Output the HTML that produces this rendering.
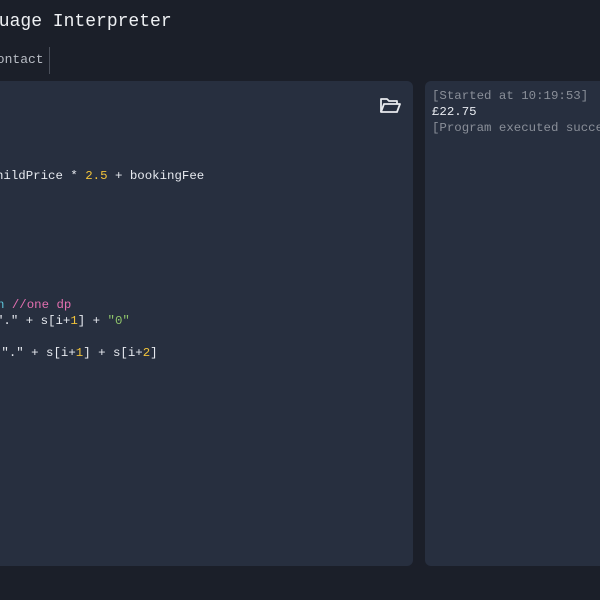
<!DOCTYPE html>
<html><head><style>
html,body{margin:0;padding:0;width:600px;height:600px;overflow:hidden;background:#1b1f29;font-family:"Liberation Mono",monospace;}
.t{position:absolute;white-space:pre;}
.panel{position:absolute;background:#272f3f;border-radius:6px;}
.code{font-size:12.4px;color:#e6e9ef;line-height:16px;}
.y{color:#f0c23a}.g{color:#8fc46a}.p{color:#e36fb0}.c{color:#5cc3d8}.gr{color:#8a8f99}
</style></head><body>
<div class="t" style="left:-12px;top:12px;font-size:18px;color:#eef0f3;">guage Interpreter</div>
<div class="t" style="left:-11px;top:52px;font-size:13px;color:#b8bcc4;">Contact</div>
<div style="position:absolute;left:49px;top:47px;width:1px;height:27px;background:#4a4f5a"></div>
<div class="panel" style="left:-10px;top:81px;width:423px;height:485px;"></div>
<div class="panel" style="left:425px;top:81px;width:190px;height:485px;"></div>
<svg style="position:absolute;left:379px;top:96px" width="23" height="19" viewBox="0 0 23 19" fill="none" stroke="#e8eaee" stroke-width="1.8" stroke-linejoin="round"><path d="M2 16V3h6l2 2h8v3"/><path d="M2 16l3-8h16l-3 8z"/></svg>
<div class="t code" style="left:-4px;top:168px;">hildPrice * <span class="y">2.5</span> + bookingFee</div>
<div class="t code" style="left:-3px;top:297px;"><span class="c">n</span> <span class="p">//one dp</span></div>
<div class="t code" style="left:-4px;top:313px;">"." + s[i+<span class="y">1</span>] + <span class="g">"0"</span></div>
<div class="t code" style="left:-6px;top:345px;"> "." + s[i+<span class="y">1</span>] + s[i+<span class="y">2</span>]</div>
<div class="t code gr" style="left:432px;top:88px;">[Started at 10:19:53]</div>
<div class="t code" style="left:432px;top:104px;">£22.75</div>
<div class="t code gr" style="left:432px;top:120px;">[Program executed successfully]</div>
</body></html>
